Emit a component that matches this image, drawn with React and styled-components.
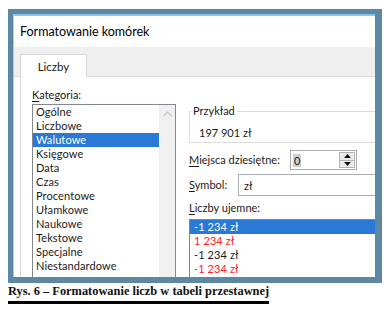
import React from "react";
import styled, { createGlobalStyle } from "styled-components";

const Global = createGlobalStyle`
  html, body { margin: 0; padding: 0; background: #ffffff; }
  body { font-family: Lato, "Noto Sans", sans-serif; }
  * { box-sizing: border-box; }
`;

const Page = styled.div`
  width: 391px;
  height: 313px;
  padding: 9px 0 0 8px;
  overflow: hidden;
  background: #ffffff;
`;

const Frame = styled.div`
  width: 374px;
  height: 274px;
  border-style: solid;
  border-color: #5b89a4;
  border-width: 5px 7px 6px 5px;
  overflow: hidden;
  background: #ffffff;
`;

const Dialog = styled.div`
  width: 460px;
  height: 100%;
  display: flex;
  flex-direction: column;
  border-top: 2px solid #8cc3ee;
  border-left: 1px solid #b8cad7;
  background: #ffffff;
  font-family: Lato, "Noto Sans", sans-serif;
  color: #1a1a1a;
`;

const TitleBar = styled.div`
  height: 31px;
  flex: none;
  display: flex;
  align-items: center;
  padding-left: 6px;
  font-size: 12.5px;
  color: #000;
`;

const TabStrip = styled.div`
  height: 30px;
  flex: none;
  display: flex;
  align-items: flex-end;
  padding-left: 6px;
  background: #efefef;
  border-bottom: 1px solid #d9d9d9;
`;

const Tab = styled.div`
  width: 67px;
  height: 23px;
  margin-bottom: -1px;
  display: flex;
  align-items: center;
  justify-content: center;
  font-size: 11.5px;
  color: #1a1a1a;
  background: ${(p) => (p.$active ? "#ffffff" : "#efefef")};
  border: 1px solid #d9d9d9;
  border-bottom: none;
`;

const TabPanel = styled.div`
  flex: 1;
  margin-left: 6px;
  border-left: 1px solid #d9d9d9;
  display: flex;
  gap: 13px;
  padding: 11px 0 0 11px;
  min-height: 0;
`;

const Column = styled.div`
  display: flex;
  flex-direction: column;
  width: ${(p) => p.$width}px;
  flex: none;
  padding-top: ${(p) => p.$top || 0}px;
`;

const Label = styled.div`
  font-size: 11px;
  line-height: 14px;
  height: 14px;
  white-space: nowrap;
  color: #1a1a1a;
  margin-top: ${(p) => p.$mt || 0}px;
  u { text-decoration: underline; text-underline-offset: 2px; }
`;

const ListBox = styled.div`
  margin-top: ${(p) => p.$mt}px;
  flex: 1;
  display: flex;
  border: 1px solid #828790;
  border-bottom: none;
  background: #fff;
`;

const Rows = styled.div`
  flex: 1;
  display: flex;
  flex-direction: column;
`;

const Row = styled.div`
  height: 14px;
  line-height: 14px;
  font-size: 11px;
  letter-spacing: 0.1px;
  padding-left: ${(p) => p.$pad}px;
  white-space: nowrap;
  background: ${(p) => (p.$selected ? "#2b79d7" : "transparent")};
  color: ${(p) => (p.$selected ? "#ffffff" : p.$color || "#1a1a1a")};
`;

const ScrollTrack = styled.div`
  width: 16px;
  flex: none;
  background: #f0f0f0;
  display: flex;
  justify-content: center;
  padding-top: 6px;
`;

const Sample = styled.fieldset`
  margin: 0;
  padding: 0 0 2px 0;
  border: 1px solid #dcdcdc;
  min-width: 0;
  legend {
    font-size: 11px;
    line-height: 14px;
    padding: 0 2px;
    margin-left: 1px;
    color: #1a1a1a;
  }
`;

const SampleValue = styled.div`
  font-size: 11px;
  line-height: 14px;
  margin-top: 8px;
  padding-left: 9px;
  color: #1a1a1a;
`;

const FieldRow = styled.div`
  display: flex;
  align-items: center;
  margin-top: ${(p) => p.$mt}px;
`;

const FieldLabel = styled(Label)`
  width: ${(p) => p.$w}px;
  flex: none;
`;

const SpinInput = styled.div`
  width: 67px;
  height: 20px;
  border: 1px solid #a9acb1;
  display: flex;
  align-items: center;
  padding: 0 1px 0 2px;
  background: #fff;
`;

const Selected = styled.span`
  font-size: 11px;
  line-height: 13px;
  background: #cfcfcf;
  color: #1a1a1a;
  padding: 0 1px;
`;

const SpinButtons = styled.div`
  margin-left: auto;
  width: 16px;
  height: 16px;
  display: flex;
  flex-direction: column;
  border: 1px solid #b5b5b5;
`;

const SpinButton = styled.div`
  flex: 1;
  display: flex;
  align-items: center;
  justify-content: center;
  background: #ececec;
  & + & { border-top: 1px solid #b5b5b5; }
`;

const Combo = styled.div`
  flex: 1;
  height: 22px;
  border: 1px solid #a9acb1;
  display: flex;
  align-items: center;
  padding-left: 5px;
  font-size: 11px;
  color: #1a1a1a;
`;

const Caption = styled.div`
  width: fit-content;
  margin-top: 1px;
  padding-bottom: 3px;
  border-bottom: 3px solid #000;
  font-family: "Liberation Serif", serif;
  font-weight: bold;
  font-size: 12.4px;
  line-height: 14px;
  color: #111;
`;

const categories = [
  "Ogólne",
  "Liczbowe",
  "Walutowe",
  "Księgowe",
  "Data",
  "Czas",
  "Procentowe",
  "Ułamkowe",
  "Naukowe",
  "Tekstowe",
  "Specjalne",
  "Niestandardowe",
];

const negatives = [
  { text: "-1 234 zł", selected: true },
  { text: "1 234 zł", color: "#ff2020" },
  { text: "-1 234 zł", color: "#1a1a1a" },
  { text: "-1 234 zł", color: "#ff2020" },
];

const Triangle = ({ up }) => (
  <svg width="7" height="4" viewBox="0 0 7 4">
    <path d={up ? "M0 4 L3.5 0 L7 4 Z" : "M0 0 L3.5 4 L7 0 Z"} fill="#111" />
  </svg>
);

export default function App() {
  return (
    <>
      <Global />
      <Page>
        <Frame>
          <Dialog>
            <TitleBar>Formatowanie komórek</TitleBar>
            <TabStrip>
              <Tab $active>Liczby</Tab>
            </TabStrip>
            <TabPanel>
              <Column $width={144}>
                <Label>
                  <u>K</u>ategoria:
                </Label>
                <ListBox $mt={2}>
                  <Rows>
                    {categories.map((c, i) => (
                      <Row key={c} $pad={3} $selected={i === 2}>
                        {c}
                      </Row>
                    ))}
                  </Rows>
                  <ScrollTrack>
                    <svg width="9" height="6" viewBox="0 0 9 6">
                      <path d="M0.5 5 L4.5 1 L8.5 5" fill="none" stroke="#c4c4c4" strokeWidth="1.2" />
                    </svg>
                  </ScrollTrack>
                </ListBox>
              </Column>
              <Column $width={220} $top={16}>
                <Sample>
                  <legend>Przykład</legend>
                  <SampleValue>197 901 zł</SampleValue>
                </Sample>
                <FieldRow $mt={7}>
                  <FieldLabel $w={101}>
                    <u>M</u>iejsca dziesiętne:
                  </FieldLabel>
                  <SpinInput>
                    <Selected>0</Selected>
                    <SpinButtons>
                      <SpinButton>
                        <Triangle up />
                      </SpinButton>
                      <SpinButton>
                        <Triangle />
                      </SpinButton>
                    </SpinButtons>
                  </SpinInput>
                </FieldRow>
                <FieldRow $mt={4}>
                  <FieldLabel $w={49}>
                    <u>S</u>ymbol:
                  </FieldLabel>
                  <Combo>zł</Combo>
                </FieldRow>
                <Label $mt={5}>
                  <u>L</u>iczby ujemne:
                </Label>
                <ListBox $mt={4}>
                  <Rows>
                    {negatives.map((n, i) => (
                      <Row key={i} $pad={4} $selected={n.selected} $color={n.color}>
                        {n.text}
                      </Row>
                    ))}
                  </Rows>
                </ListBox>
              </Column>
            </TabPanel>
          </Dialog>
        </Frame>
        <Caption>Rys. 6 – Formatowanie liczb w tabeli przestawnej</Caption>
      </Page>
    </>
  );
}
